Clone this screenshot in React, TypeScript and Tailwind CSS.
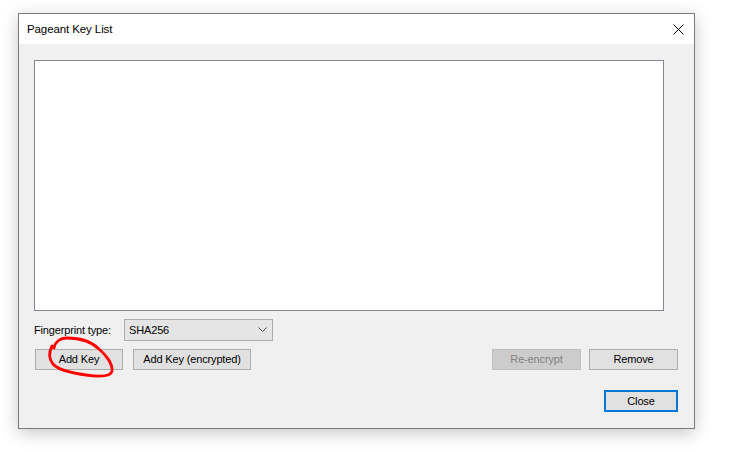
import React from "react";

const font = { fontFamily: '"Liberation Sans", Arial, sans-serif' };

function Btn({ children, w, disabled, primary }: { children: React.ReactNode; w: string; disabled?: boolean; primary?: boolean }) {
  return (
    <div
      className={`${w} flex items-center justify-center text-[11px] tracking-[-0.15px] ${
        primary
          ? "h-[22px] border-2 border-[#0078d7] bg-[#e1e1e1] text-black"
          : disabled
          ? "h-[21px] border border-[#bfbfbf] bg-[#cccccc] text-[#838383]"
          : "h-[21px] border border-[#adadad] bg-[#e1e1e1] text-black"
      }`}
    >
      {children}
    </div>
  );
}

export default function App() {
  return (
    <div className="relative w-[741px] h-[452px] bg-white overflow-hidden" style={font}>
      <div className="ml-[18px] mt-[13px] w-[677px] h-[416px] border border-[#7a7a7a] bg-[#f0f0f0] flex flex-col shadow-[0_4px_16px_rgba(0,0,0,0.22)]">
        <div className="h-[30px] bg-white flex items-center justify-between pl-[8px] pr-[10px]">
          <span className="text-[11.5px] tracking-[-0.1px] text-black mt-[1px]">Pageant Key List</span>
          <svg width="11" height="11" viewBox="0 0 11 11">
            <path d="M0.5 0.5 L10.5 10.5 M10.5 0.5 L0.5 10.5" stroke="#000" strokeWidth="1" />
          </svg>
        </div>
        <div className="flex-1 flex flex-col pl-[15px] pr-[16px] pt-[16px]">
          <div className="w-[630px] h-[251px] bg-white border border-[#828790]" />
          <div className="flex items-center mt-[8px] h-[22px]">
            <span className="text-[11px] tracking-[-0.15px] text-black w-[90px]">Fingerprint type:</span>
            <div className="w-[149px] h-[22px] border border-[#adadad] bg-[#e5e5e5] flex items-center justify-between pl-[4px] pr-[5px]">
              <span className="text-[11px] tracking-[-0.15px] text-black">SHA256</span>
              <svg width="9" height="6" viewBox="0 0 9 6">
                <path d="M0.5 0.5 L4.5 4.5 L8.5 0.5" stroke="#555" strokeWidth="1" fill="none" />
              </svg>
            </div>
          </div>
          <div className="flex items-center mt-[8px]">
            <Btn w="w-[88px] ml-[1px]">Add Key</Btn>
            <Btn w="w-[118px] ml-[10px]">Add Key (encrypted)</Btn>
            <div className="flex-1" />
            <Btn w="w-[89px]" disabled>Re-encrypt</Btn>
            <Btn w="w-[89px] ml-[8px]">Remove</Btn>
          </div>
          <div className="flex justify-end mt-[20px]">
            <Btn w="w-[74px]" primary>Close</Btn>
          </div>
        </div>
      </div>
      <svg className="absolute left-0 top-0 pointer-events-none" width="741" height="452">
        <path
          d="M54 348 C55 342, 60 338, 67 338 C80 338, 92 342, 99 349 C106 355, 113 364, 112 371 C111 377, 100 377, 86 375 C72 373, 58 370, 53 364 C49 359, 49 352, 52 346"
          stroke="#ff0000"
          strokeWidth="2.8"
          fill="none"
          strokeLinecap="round"
          strokeLinejoin="round"
        />
      </svg>
    </div>
  );
}
